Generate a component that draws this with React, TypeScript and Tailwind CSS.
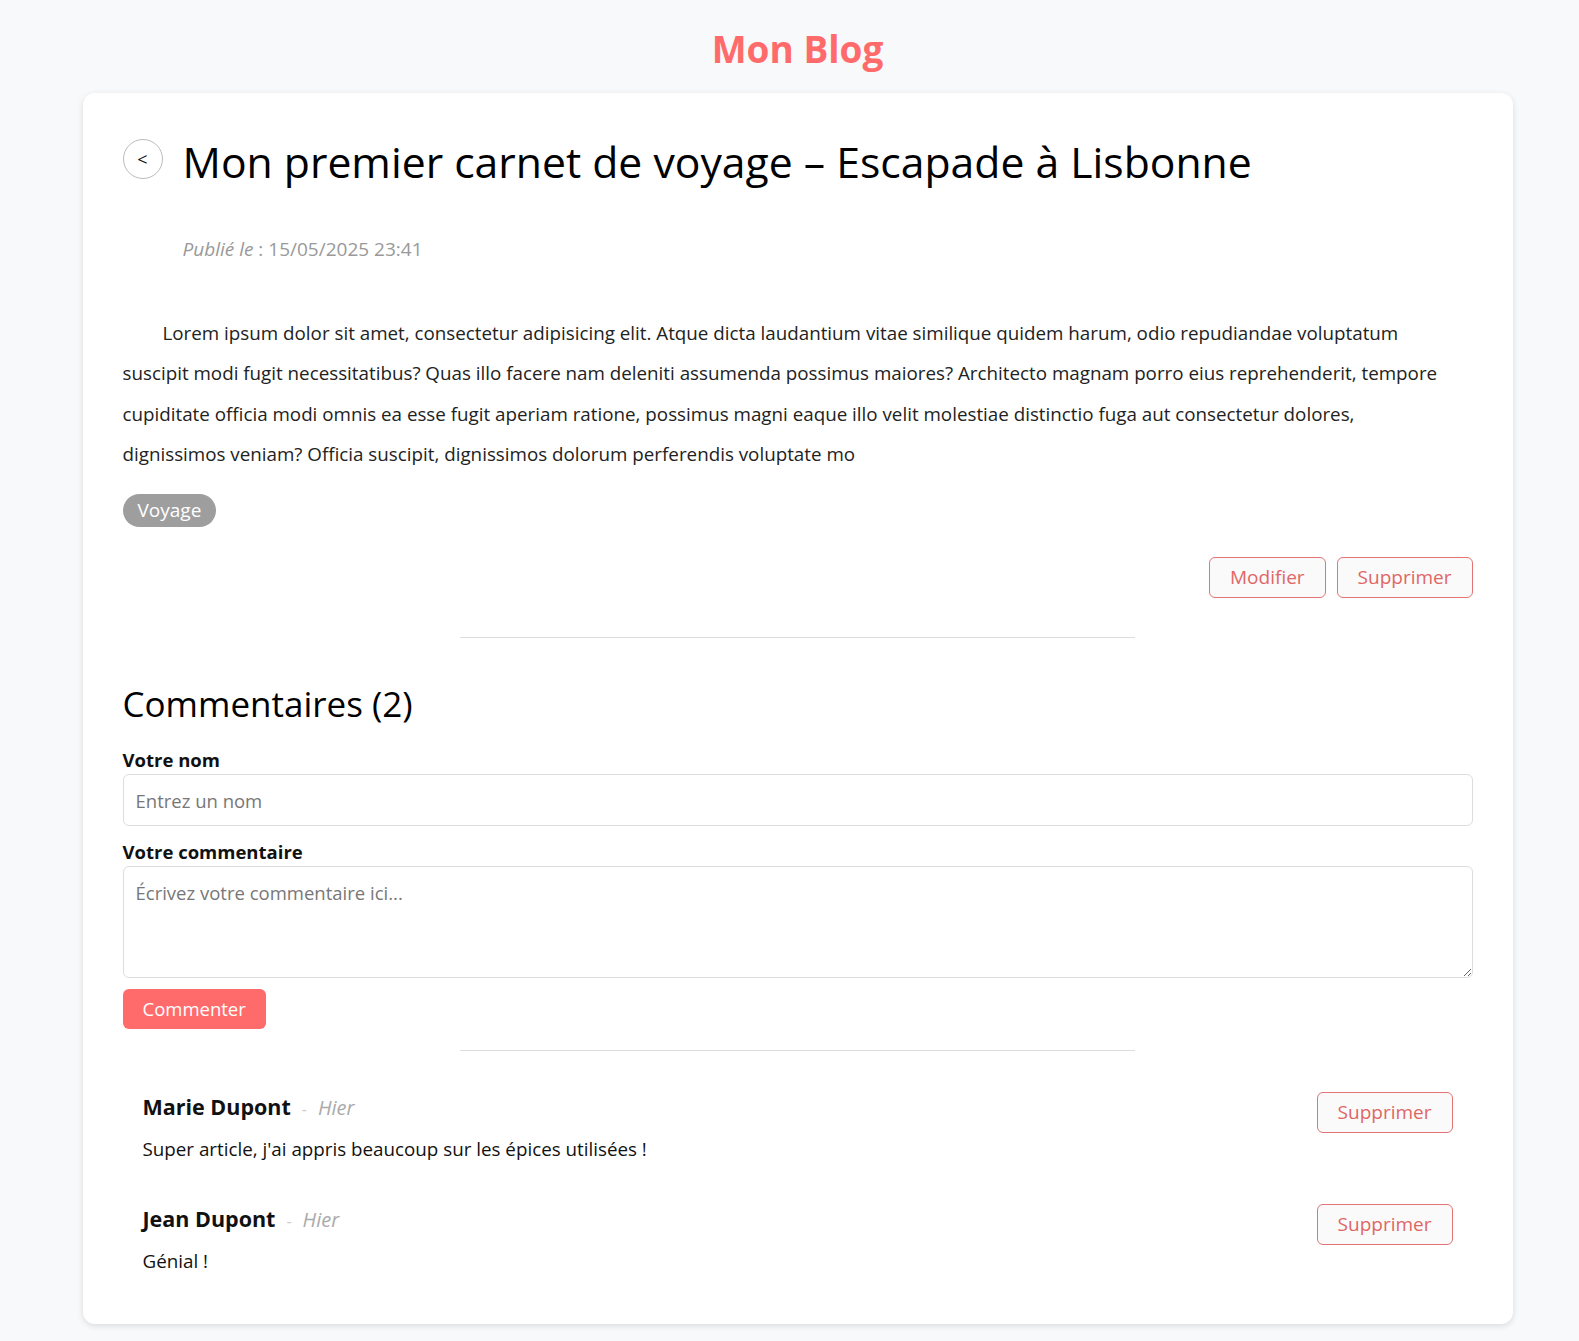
import { useState } from 'react'

type Comment = { id: number; author: string; date: string; text: string }

const COMMENTS: Comment[] = [
  { id: 1, author: 'Marie Dupont', date: 'Hier', text: "Super article, j'ai appris beaucoup sur les épices utilisées !" },
  { id: 2, author: 'Jean Dupont', date: 'Hier', text: 'Génial !' },
]

const BODY =
  'Lorem ipsum dolor sit amet, consectetur adipisicing elit. Atque dicta laudantium vitae similique quidem harum, odio repudiandae voluptatum suscipit modi fugit necessitatibus? Quas illo facere nam deleniti assumenda possimus maiores? Architecto magnam porro eius reprehenderit, tempore cupiditate officia modi omnis ea esse fugit aperiam ratione, possimus magni eaque illo velit molestiae distinctio fuga aut consectetur dolores, dignissimos veniam? Officia suscipit, dignissimos dolorum perferendis voluptate mo'

const outlineBtn =
  'rounded-md border border-[#e57373] bg-[#fafafa] px-5 text-[19px] leading-[39px] text-[#e06666] hover:bg-[#fff0f0]'

export default function App() {
  const [name, setName] = useState('')
  const [text, setText] = useState('')

  return (
    <div className="min-h-screen bg-[#f8f9fa] pb-4 pl-4 font-['Open_Sans',sans-serif] text-[#111]">
      <h1 className="pt-[24px] text-center text-[37px] font-bold leading-[50px] text-[#ff6b6b]">Mon Blog</h1>

      <main className="mx-auto mt-[19px] w-[1430px] rounded-xl bg-white px-10 pb-[50px] pt-[44px] shadow-[0_2px_6px_rgba(0,0,0,0.12)]">
        <div className="flex items-start gap-5">
          <button
            type="button"
            aria-label="Retour"
            className="mt-[2px] flex h-10 w-10 shrink-0 items-center justify-center rounded-full border border-[#bbb] bg-white text-[18px] leading-none"
          >
            &lt;
          </button>
          <h2 className="text-[42.7px] font-normal leading-[50px] text-black">
            Mon premier carnet de voyage – Escapade à Lisbonne
          </h2>
        </div>

        <p className="mt-[49px] pl-[60px] text-[19px] leading-[26px] text-[#999]">
          <em>Publié le</em> : 15/05/2025 23:41
        </p>

        {/* right padding keeps the line breaks where the original wraps them */}
        <p className="mt-[51px] pr-4 indent-10 text-[18.8px] leading-[40.3px] text-[#222]">{BODY}</p>

        <span className="mt-[20px] inline-block rounded-full bg-[#9e9e9e] px-[15px] text-[19px] leading-[33px] text-white">
          Voyage
        </span>

        <div className="mt-[30px] flex justify-end gap-[11px]">
          <button type="button" className={outlineBtn}>Modifier</button>
          <button type="button" className={outlineBtn}>Supprimer</button>
        </div>

        <hr className="mx-auto mt-[39px] w-1/2 border-[#ddd]" />

        <h3 className="mt-[42px] text-[35px] font-normal leading-[48px] text-black">Commentaires (2)</h3>

        <form className="mt-[19px]" onSubmit={(e) => e.preventDefault()}>
          <label className="block text-[18.5px] font-bold leading-[26px]">Votre nom</label>
          <input
            value={name}
            onChange={(e) => setName(e.target.value)}
            placeholder="Entrez un nom"
            className="mt-[1px] block h-[52px] w-full rounded-md border border-[#ddd] px-3 text-[18.5px] outline-none placeholder:text-[#777]"
          />
          <label className="mt-[13px] block text-[18.5px] font-bold leading-[26px]">Votre commentaire</label>
          <textarea
            value={text}
            onChange={(e) => setText(e.target.value)}
            placeholder="Écrivez votre commentaire ici..."
            className="mt-[1px] block h-[112px] w-full rounded-md border border-[#ddd] px-3 py-[12px] text-[18.5px] outline-none placeholder:text-[#777]"
          />
          <button
            type="submit"
            className="mt-[11px] rounded-md bg-[#ff6b6b] px-5 text-[18.5px] leading-[40px] text-white hover:bg-[#ff5252]"
          >
            Commenter
          </button>
        </form>

        <hr className="mx-auto mt-[21px] w-1/2 border-[#ddd]" />

        <ul className="mt-[25px] flex flex-col gap-[26px]">
          {COMMENTS.map((c) => (
            <li key={c.id} className="flex items-start justify-between px-5 pt-[16px]">
              <div>
                <div className="flex items-baseline gap-[11px]">
                  <span className="text-[21.5px] font-bold leading-[30px]">{c.author}</span>
                  <span className="text-[16px] text-[#ccc]">-</span>
                  <span className="text-[20px] italic text-[#aaa]">{c.date}</span>
                </div>
                <p className="mt-[13px] text-[18.8px] leading-[26px] text-[#111]">{c.text}</p>
              </div>
              <button type="button" className={outlineBtn}>Supprimer</button>
            </li>
          ))}
        </ul>
      </main>
    </div>
  )
}
